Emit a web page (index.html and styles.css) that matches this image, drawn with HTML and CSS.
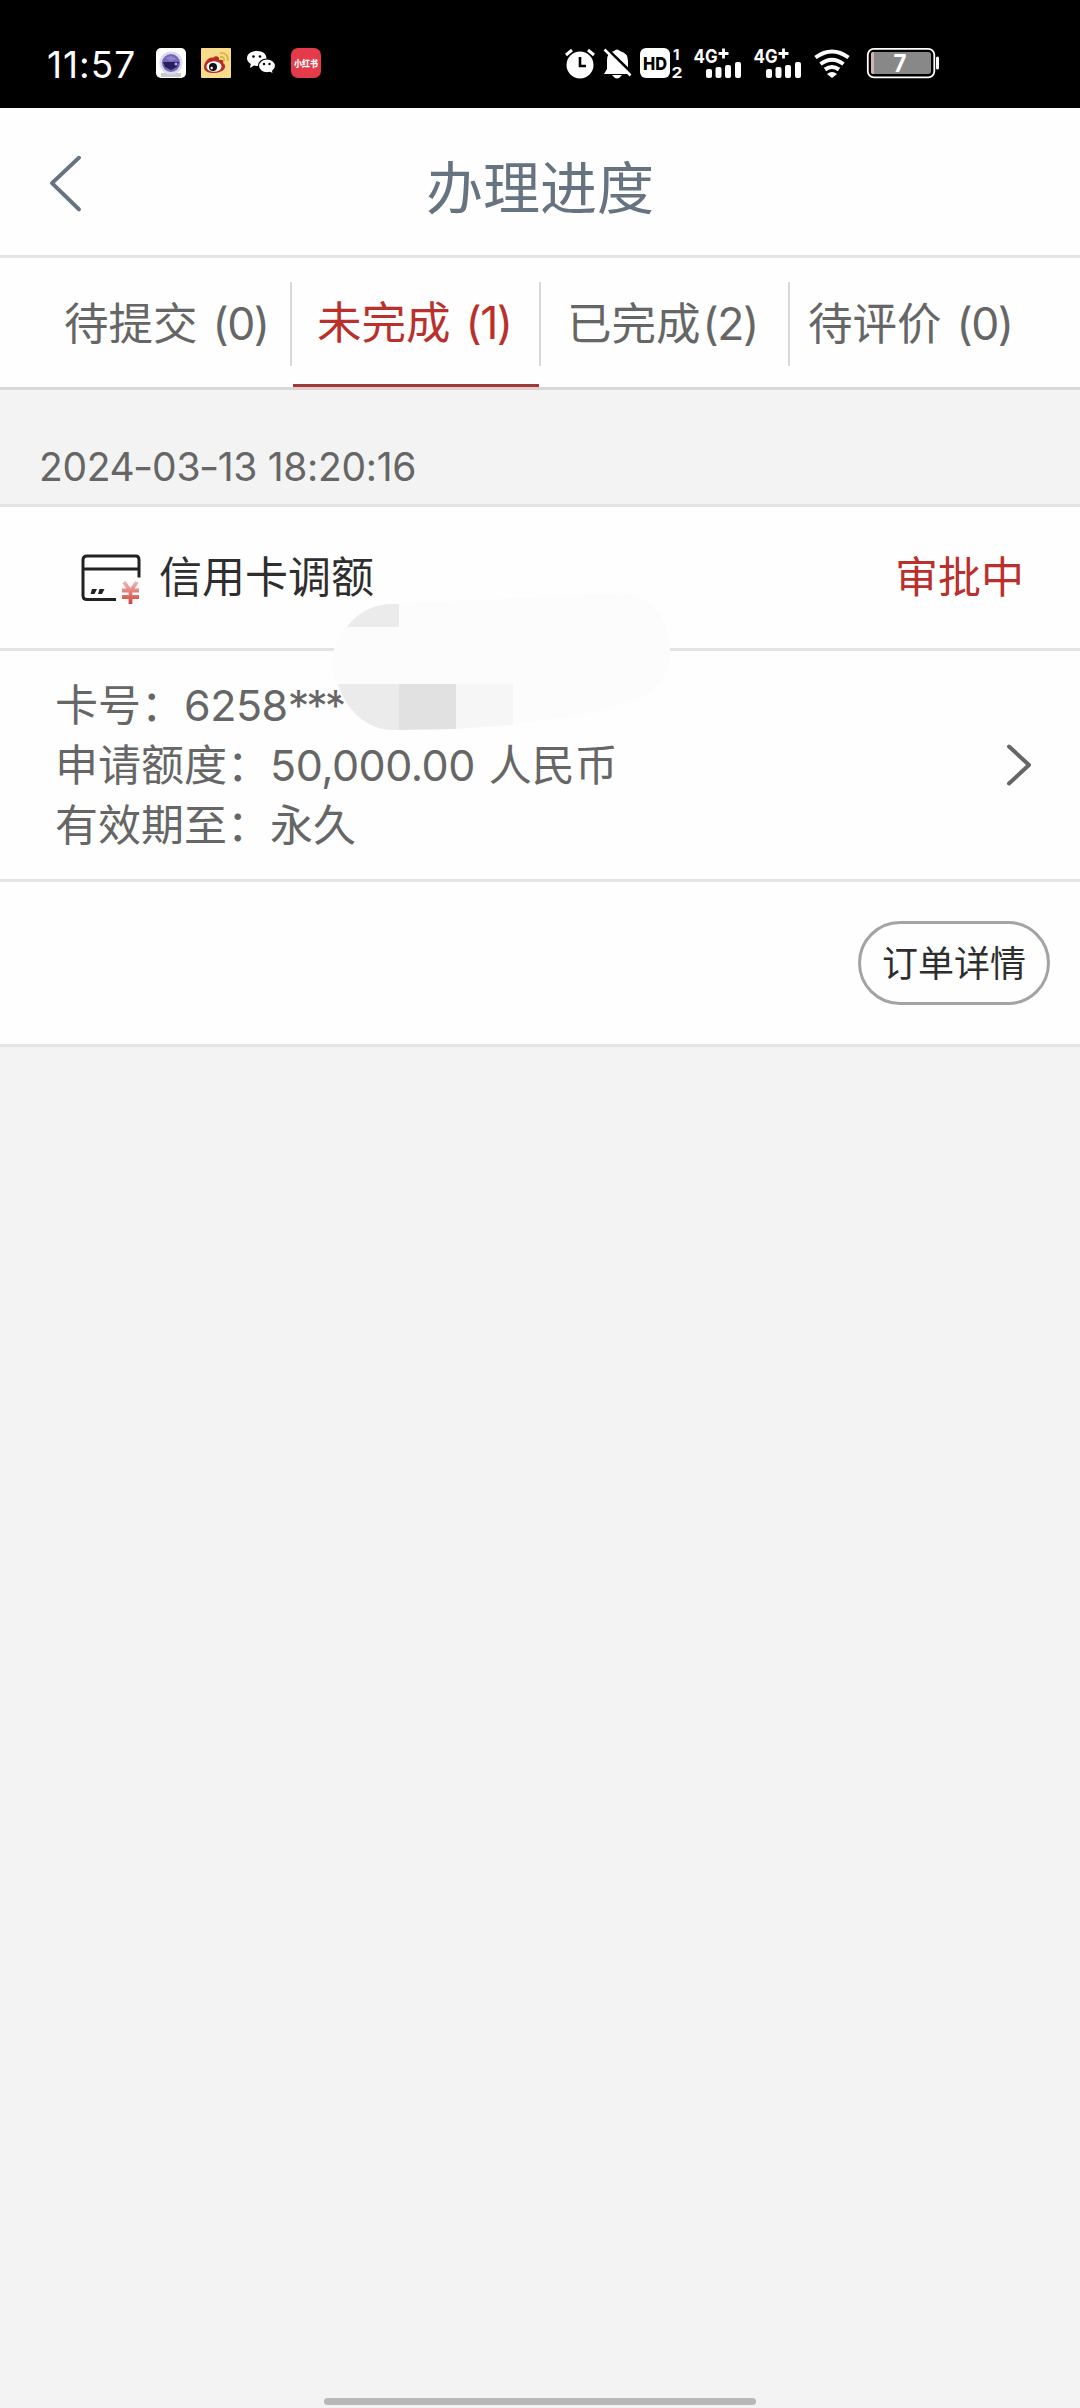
FILE: index.html
```html
<!DOCTYPE html>
<html lang="zh-CN">
<head>
<meta charset="utf-8">
<title>办理进度</title>
<link rel="stylesheet" href="styles.css">
</head>
<body>
<div class="status">
  <span class="clock">11:57</span>
  <svg class="app" width="30" height="30" viewBox="0 0 30 30"><rect width="30" height="30" rx="5" fill="#fff"/><path d="M5 25h20v4H5z" fill="#c9c9ce"/><circle cx="15" cy="15" r="11.500" fill="#dcd9ef"/><circle cx="15" cy="15" r="9" fill="#7468b5"/><path d="M7 14h16l-2 5-6 3-6-3z" fill="#25205c"/><path d="M9 10l6-2 6 3-6 2z" fill="#9187cf"/><circle cx="20" cy="16" r="1.500" fill="#9fb4ff"/></svg>
  <svg class="app" width="30" height="30" viewBox="0 0 30 30"><rect width="30" height="30" rx="1" fill="#f8dc8b"/><path d="M3 19c0-5 6-11 9-9 2-3 7-2 6 2 4-1 5 1 4 3 5 3 1 10-9 10-6 0-10-2-10-6z" fill="#b92c25"/><ellipse cx="13" cy="18.500" rx="7.500" ry="5.300" fill="#fff"/><circle cx="12" cy="19" r="4" fill="#111"/><circle cx="10.700" cy="20" r="1.200" fill="#fff"/><path d="M19 9c3-.5 5 1 4 4M19 5c6-1 9 4 7.500 8" fill="none" stroke="#deb340" stroke-width="1.800"/></svg>
  <svg class="app" width="30" height="30" viewBox="0 0 30 30"><path d="M11 3c6 0 9.500 3 9.500 7.500S17 18 11 18l-3-.5L4 20l.8-4C2.500 14.500 1 12.700 1 10.500 1 6 5 3 11 3z" fill="#fff"/><path d="M21 11c5 0 8.500 3 8.500 7 0 2-1 3.700-2.800 5l.6 3-3.300-1.600-3 .4c-5 0-8.500-3-8.500-6.800s3.500-7 8.500-7z" fill="#fff" stroke="#000" stroke-width="1.200"/><circle cx="7.500" cy="8.500" r="1.300"/><circle cx="14" cy="8.500" r="1.300"/><circle cx="18" cy="16" r="1.200"/><circle cx="23.500" cy="16" r="1.200"/></svg>
  <svg class="app" width="30" height="30" viewBox="0 0 30 30"><rect width="30" height="30" rx="7" fill="#e53a49"/><text x="3" y="18.500" class="xhs" textLength="24" lengthAdjust="spacingAndGlyphs">小红书</text></svg>

  <svg class="sys" width="390" height="40" viewBox="560 43 390 40">
    <g fill="#fff">
      <circle cx="580" cy="65" r="13.500"/><path d="M566 55l6-5M594 55l-6-5" stroke="#fff" stroke-width="3"/><path d="M580 57v9h6" fill="none" stroke="#000" stroke-width="2.600"/>
      <path d="M607 69V60q0-7 7-9 3-3 6 0 8 2 8 10v9l3 4h-27z"/><path d="M612 75h10q-5 7-10 0z"/><path d="M606 48l28 27" stroke="#000" stroke-width="3"/><path d="M604.500 49.500l26 26" stroke="#fff" stroke-width="2.500"/>
      <rect x="640" y="48" width="30" height="30" rx="6"/>
      <text x="643" y="69.500" class="hd" textLength="24" lengthAdjust="spacingAndGlyphs">HD</text>
      <text x="673" y="60" class="num">1</text><text x="671.500" y="77.500" class="num" textLength="11" lengthAdjust="spacingAndGlyphs">2</text>
      <text x="693.500" y="62.500" class="net" textLength="24" lengthAdjust="spacingAndGlyphs">4G</text><path d="M718.500 53.500h10M723.500 48.500v10" stroke="#fff" stroke-width="2.800"/>
      <rect x="706" y="69" width="6" height="9" rx="2"/><rect x="715.500" y="67" width="6" height="11" rx="2"/><rect x="725" y="65" width="6" height="13" rx="2"/><rect x="735" y="62" width="6" height="16" rx="2"/>
      <text x="753.500" y="62.500" class="net" textLength="24" lengthAdjust="spacingAndGlyphs">4G</text><path d="M778.500 53.500h10M783.500 48.500v10" stroke="#fff" stroke-width="2.800"/>
      <rect x="766" y="69" width="6" height="9" rx="2"/><rect x="775.500" y="67" width="6" height="11" rx="2"/><rect x="785" y="65" width="6" height="13" rx="2"/><rect x="795" y="62" width="6" height="16" rx="2"/>
      <path d="M815.500 57.500q16.500-12 33 0M820.500 64q11.500-8.500 23 0M825 69.500q7-5 14 0" fill="none" stroke="#fff" stroke-width="4"/><path d="M827 74q5-4 10 0l-5 4z"/>
      <rect x="867.800" y="48.800" width="66.500" height="28.500" rx="6" fill="none" stroke="#fff" stroke-width="1.800"/><rect x="871" y="52" width="60" height="22" rx="3" fill="#888"/><path d="M874 52h-1q-2 0-2 2v18q0 2 2 2h1z" fill="#d6b3b3"/><rect x="936" y="56.500" width="3" height="13" rx="1.500"/>
      <text x="893.500" y="71.500" class="bat" textLength="13" lengthAdjust="spacingAndGlyphs">7</text>
    </g>
  </svg>
</div>

<header class="header">
  <svg class="back" width="40" height="80" viewBox="0 0 40 80"><path d="M34 5L7 32l27 28" transform="translate(-4 11) scale(1 .94)" fill="none" stroke="#667381" stroke-width="4" stroke-linecap="round" stroke-linejoin="round"/></svg>
  <h1 class="title">办理进度</h1>
</header>

<nav class="tabs">
  <a class="tab t1">待提交<span class="cnt">(0)</span></a>
  <a class="tab t2 active">未完成<span class="cnt">(1)</span></a>
  <a class="tab t3">已完成<span class="cnt tight">(2)</span></a>
  <a class="tab t4">待评价<span class="cnt">(0)</span></a>
</nav>

<div class="date">2024<span class="dash">-</span>03<span class="dash">-</span>13 18:20:16</div>

<section class="order">
  <div class="head">
    <svg class="card" width="62" height="54" viewBox="0 0 62 54"><defs><linearGradient id="yen" gradientUnits="userSpaceOnUse" x1="0" y1="29" x2="0" y2="53"><stop offset="0" stop-color="#f2b8b2"/><stop offset="1" stop-color="#cf3b38"/></linearGradient></defs><path d="M36 47.500H7q-4 0-4-4V8q0-4 4-4h49q3 0 3 4v17.500M3 17h56" fill="none" stroke="#222" stroke-width="3"/><path d="M12 37h5l-2.500 5h-4zM19.500 37h5l-2.500 5h-4z" fill="#222"/><path d="M44 30l6.500 9 6.500-9M42 38.500h17M42 45h17M50.500 38v14" fill="none" stroke="url(#yen)" stroke-width="3.800"/></svg>
    <span class="name">信用卡调额</span>
    <span class="state">审批中</span>
  </div>
  <div class="info">
    <div class="lines">
      <div>卡号：<span class="lat">6258</span><span class="stars">***</span></div>
      <div>申请额度：<span class="lat">50,000.00</span><span class="cur">人民币</span></div>
      <div>有效期至：永久</div>
    </div>
    <svg class="go" width="28" height="46" viewBox="0 0 28 46"><path d="M4 4.500L24 23 4 41.500" fill="none" stroke="#666" stroke-width="4" stroke-linecap="round" stroke-linejoin="round"/></svg>
  </div>
  <div class="foot"><button class="btn">订单详情</button></div>
  <svg class="mask" width="342" height="142" viewBox="330 591 342 142">
    <path d="M332 662C334 625 365 604 393 604L620 593C650 592 670 620 670 650C670 685 645 700 615 706C580 718 510 725 456 729L393 730C365 730 332 702 332 662z" fill="#fcfcfc"/>
    <path d="M347 627Q364 604 393 604h6v23z" fill="#ebebeb"/>
    <path d="M338 684h61v46h-6C368 730 347 712 338 684z" fill="#ebebeb"/>
    <path d="M399 684h57v45l-57 1z" fill="#e1e1e1"/><path d="M456 684h57v41l-57 4z" fill="#f6f6f6"/>
  </svg>
</section>
<div class="homebar"></div>
</body>
</html>
```
FILE: styles.css
```css
* { box-sizing: border-box; }
body {
  margin: 0;
  width: 1080px;
  height: 2408px;
  display: flex;
  flex-direction: column;
  background: #f3f3f3;
  color: #666;
  font-family: Inter, "Noto Sans CJK SC", sans-serif;
}
.status {
  height: 108px;
  background: #000;
  color: #fff;
  display: flex;
  align-items: center;
  padding: 18px 130px 0 47px;
}
.clock { width: 109px; padding-top: 4px; font-size: 37px; letter-spacing: 1px; line-height: 40px; }
.app { margin-right: 15px; }
.sys { margin-left: auto; }
.xhs { font: 900 9px "Noto Sans CJK SC", sans-serif; fill: #fff; }
.hd { font: 800 18px Inter, sans-serif; fill: #000; }
.num { font: 700 15px Inter, sans-serif; }
.net { font: 700 19px Inter, sans-serif; }
.bat { font: 700 24px Inter, sans-serif; }

.header {
  height: 150px;
  background: #fefefe;
  border-bottom: 3px solid #e4e4e4;
  display: grid;
  grid-template-columns: 100px 1fr 100px;
  align-items: center;
}
.back { margin-left: 49px; }
.title {
  margin: 5px 0 0;
  text-align: center;
  font: 400 57px/80px "Noto Sans CJK SC", sans-serif;
  color: #667381;
}

.tabs {
  height: 132px;
  background: #fefefe;
  border-bottom: 3px solid #d8d8d8;
  display: grid;
  grid-template-columns: 292px 249px 249px 1fr;
}
.tab {
  display: flex;
  align-items: center;
  padding-top: 2px;
  font-size: 44.5px;
  line-height: 60px;
  white-space: nowrap;
  background: linear-gradient(#d8d8d8, #d8d8d8) right 24px / 2px 84px no-repeat;
}
.t1 { padding-left: 64px; }
.t2 { padding-left: 25px; }
.t3 { padding-left: 26px; }
.t4 { padding-left: 18px; background: none; }
.active { color: #b9302c; position: relative; padding-top: 0; }
.active::after {
  content: "";
  position: absolute;
  left: 1px;
  right: 2px;
  bottom: -2px;
  height: 3px;
  background: #983b3b;
  border-bottom: 2px solid #efc9c9;
}
.cnt { margin-left: 15px; letter-spacing: -1.5px; }
.tight { margin-left: 2px; }

.date {
  height: 117px;
  padding: 53px 0 0 39px;
  border-bottom: 3px solid #e4e4e4;
  font-size: 39px;
  letter-spacing: -0.32px;
  line-height: 48px;
}
.dash { display: inline-block; transform: scaleX(1.15); }

.order { position: relative; background: #fefefe; border-bottom: 3px solid #e4e4e4; }
.head {
  height: 144px;
  display: flex;
  align-items: center;
  padding: 0 56px 0 80px;
  border-bottom: 3px solid #e4e4e4;
  font-size: 43px;
}
.card { margin-top: 3px; }
.name { margin: 0 0 7px 17px; color: #2e2e2e; }
.state { margin: 0 0 7px auto; color: #b9302c; }
.info {
  height: 231px;
  display: flex;
  align-items: center;
  justify-content: space-between;
  padding: 0 47px 0 55px;
  border-bottom: 3px solid #e4e4e4;
  font-size: 43px;
  line-height: 60px;
}
.lat { letter-spacing: -0.5px; }
.stars { letter-spacing: -3px; }
.cur { margin-left: 14px; }
.foot { height: 162px; display: flex; justify-content: flex-end; align-items: center; padding-right: 30px; }
.btn {
  width: 192px;
  height: 84px;
  padding: 0 0 4px;
  border: 3px solid #a3a3a3;
  border-radius: 42px;
  background: #fefefe;
  color: #2e2e2e;
  font: 36px "Noto Sans CJK SC", sans-serif;
}
.mask { position: absolute; left: 330px; top: 84px; }
.homebar { width: 432px; height: 7px; margin: auto auto 3px; border-radius: 4px; background: #b8b8b8; }
```
